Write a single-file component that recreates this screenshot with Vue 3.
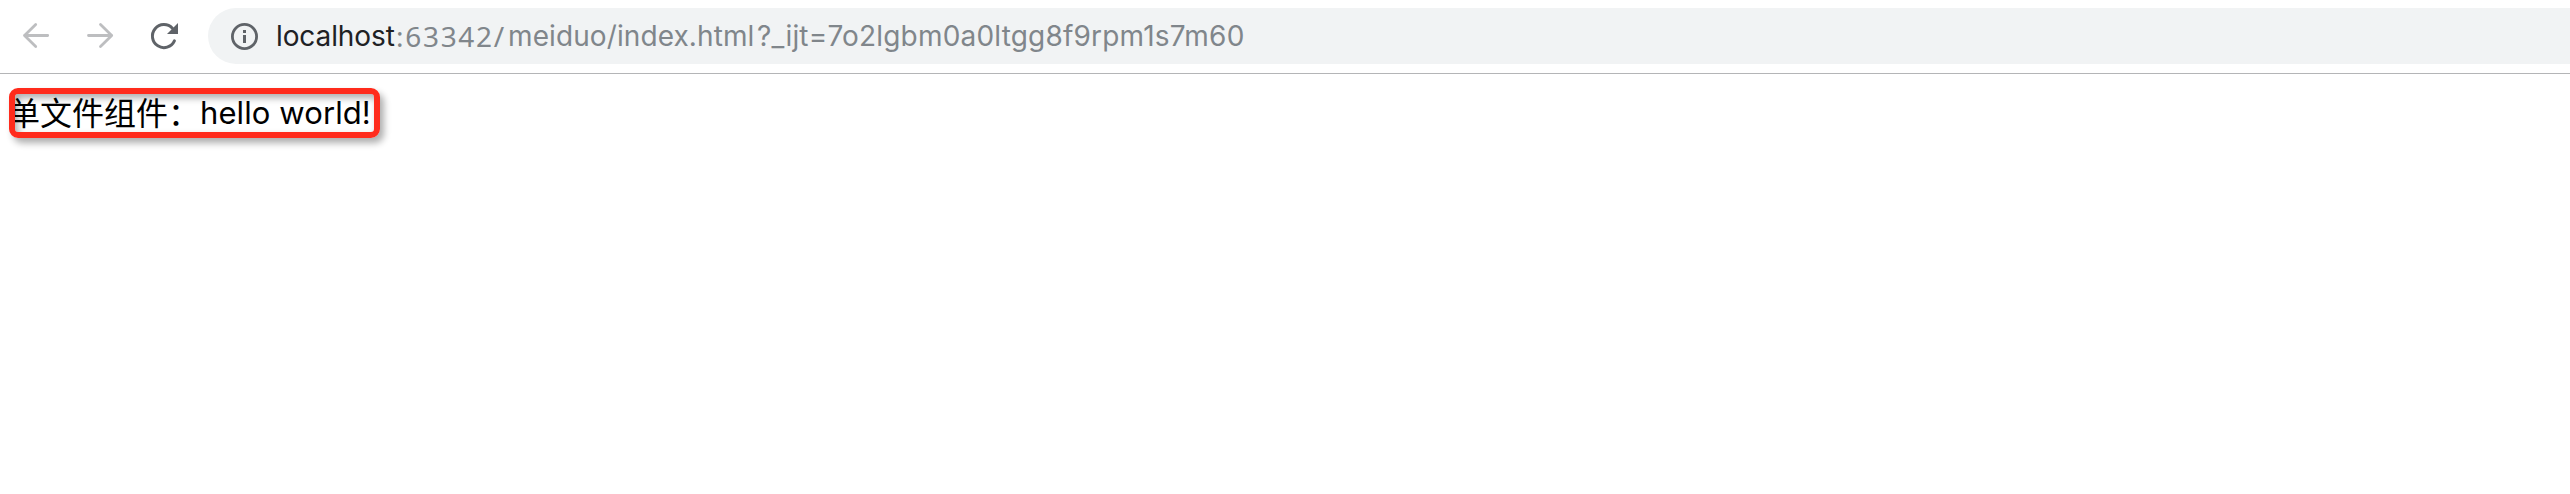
<script setup>
const host = 'localhost'
const port = ':63342/'
const path = 'meiduo/index.html'
const query = '?_ijt=7o2lgbm0a0ltgg8f9rpm1s7m60'
</script>

<template>
  <div class="window">
    <header class="toolbar">
      <svg class="icon muted" viewBox="0 0 32 32">
        <path d="M27.7 15.5H4.5M15.7 4.5L4.5 15.5L15.7 26.5" />
      </svg>
      <svg class="icon muted" viewBox="0 0 32 32">
        <path d="M4.5 15.5H27.7M16.5 4.5L27.7 15.5L16.5 26.5" />
      </svg>
      <svg class="icon reload" viewBox="0 0 32 32">
        <path d="M26.4 20.9A11.5 11.5 0 1 1 24.4 8.3" />
        <path class="solid" d="M30 3V14H19Z" />
      </svg>
      <div class="address">
        <svg class="info" viewBox="0 0 28 28">
          <circle cx="14.5" cy="14.5" r="12.1" />
          <path d="M13 8H16V11H13ZM13 13H16V21H13Z" />
        </svg>
        <div class="url"><span class="host">{{ host }}</span><span class="port">{{ port }}</span><span class="path">{{ path }}</span><span class="query">{{ query }}</span></div>
      </div>
    </header>
    <main class="page">
      <div class="message"><span class="zh">单文件组件：</span><span class="en">hello world!</span><i class="frame"></i></div>
    </main>
  </div>
</template>

<style>
body { margin: 0; background: #fff; }
</style>

<style scoped>
.window { height: 494px; overflow: hidden; background: #fff; }
.toolbar {
  box-sizing: border-box;
  height: 74px;
  padding: 8px 0 9px 20px;
  display: flex;
  align-items: center;
  border-bottom: 1px solid #b4b5b7;
}
.icon {
  width: 32px;
  height: 32px;
  margin-right: 32px;
  flex: none;
  fill: none;
  stroke: #bdbec0;
  stroke-width: 2.8;
  stroke-linecap: round;
  stroke-linejoin: round;
}
.reload { stroke: #5f6368; stroke-width: 3; margin-right: 28px; }
.solid { fill: #5f6368; stroke: none; }
.address {
  flex: 1;
  height: 56px;
  display: flex;
  align-items: center;
  border-radius: 28px 0 0 28px;
  background: #f1f3f4;
}
.info { width: 28px; height: 28px; margin: 0 18px 0 22px; flex: none; fill: #5f6368; }
.info circle { fill: none; stroke: #5f6368; stroke-width: 2.8; }
.url {
  display: flex;
  font: 28px/56px Inter, sans-serif;
  white-space: pre;
  color: #80868b;
}
.host { color: #202124; width: 120px; letter-spacing: -0.1px; }
.port { width: 112px; font-family: "Noto Sans", sans-serif; letter-spacing: 1.7px; }
.path { width: 249px; letter-spacing: 0.1px; }
.query { letter-spacing: 0.19px; }
.page { padding: 16px 8px; }
.message {
  position: relative;
  display: flex;
  width: 364px;
  height: 46px;
  color: #000;
  white-space: pre;
}
.zh { width: 192px; font: 32px/42px "Noto Sans CJK SC", sans-serif; }
.en { font: 31px/45px Inter, sans-serif; letter-spacing: 0.1px; }
.frame {
  position: absolute;
  left: 1px;
  top: -2px;
  width: 359px;
  height: 38px;
  border: 6px solid #ff2b1c;
  border-radius: 9px;
  box-shadow: 4px 5px 7px rgba(0, 0, 0, .32), inset 3px 4px 7px rgba(0, 0, 0, .32);
}
</style>
